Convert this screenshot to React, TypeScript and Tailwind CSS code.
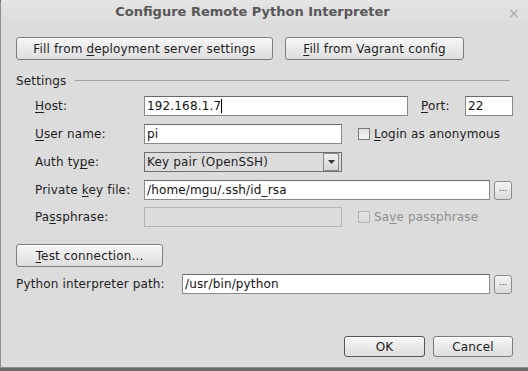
const U = ({ children }: { children: string }) => (
  <span className="underline underline-offset-2 decoration-1">{children}</span>
)

const Button = ({ className = "", children }: { className?: string; children: React.ReactNode }) => (
  <button
    className={
      "flex items-center justify-center rounded-[3px] border border-[#7d7d7d] bg-gradient-to-b from-[#f7f7f7] to-[#dedede] shadow-[inset_0_1px_0_#ffffff] text-[#1e1e1e] " +
      className
    }
  >
    {children}
  </button>
)

const Input = ({ className = "", value = "", caret = false }: { className?: string; value?: string; caret?: boolean }) => (
  <div
    className={
      "flex items-center h-[20px] bg-white border border-[#8a8a8a] border-t-[#6a6a6a] pl-[2px] text-[#111] " + className
    }
  >
    <span>{value}</span>
    {caret && <span className="w-px h-[14px] bg-black" />}
  </div>
)

const Browse = () => (
  <div className="ml-[4px] flex items-center justify-center w-[18px] h-[19px] rounded-[3px] border border-[#8a8a8a] bg-gradient-to-b from-[#f5f5f5] to-[#dadada] text-[8px] leading-none text-[#333] pb-[3px]">
    ...
  </div>
)

const Check = ({ disabled = false }: { disabled?: boolean }) => (
  <div
    className={
      "w-[12px] h-[12px] border bg-gradient-to-b " +
      (disabled ? "border-[#b2b2b2] from-[#e4e4e4] to-[#dcdcdc]" : "border-[#7a7a7a] from-[#e0e0e0] to-[#f4f4f4]")
    }
  />
)

const Label = ({ children }: { children: React.ReactNode }) => (
  <div className="w-[109px] shrink-0">{children}</div>
)

export default function App() {
  return (
    <div className="w-[528px] h-[371px] bg-[#6b6b6b] font-['DejaVu_Sans',sans-serif] text-[12px] tracking-[0.15px] text-[#1e1e1e]">
      <div className="flex flex-col w-[528px] h-[368px] bg-[#dcdcdc] border-l border-b border-[#8e8e8e] rounded-tl-[4px]">
        <div className="relative flex items-center justify-center h-[24px] pr-[24px] bg-gradient-to-b from-[#e4e4e4] to-[#dcdcdc]">
          <span className="font-bold text-[13px] tracking-normal text-[#575757]">Configure Remote Python Interpreter</span>
          <span className="absolute right-[8px] top-[3px] text-[14px] text-[#a8a8a8]">×</span>
        </div>

        <div className="flex flex-col flex-1 pl-[15px] pr-[15px] pt-[13px] pb-[10px]">
          <div className="flex gap-[12px]">
            <Button className="w-[257px] h-[23px]">
              <span>
                Fill from <U>d</U>eployment server settings
              </span>
            </Button>
            <Button className="w-[179px] h-[23px]">
              <span>
                <U>F</U>ill from Vagrant config
              </span>
            </Button>
          </div>

          <div className="mt-[12px] flex items-center h-[17px]">
            <span>Settings</span>
            <div className="ml-[9px] mr-[3px] flex-1 h-px bg-[#a0a0a0]" />
          </div>

          <div className="mt-[7px] pl-[19px] flex flex-col">
            <div className="flex items-center">
              <Label>
                <U>H</U>ost:
              </Label>
              <Input className="w-[264px]" value="192.168.1.7" caret />
              <div className="ml-[13px] w-[44px]">
                <U>P</U>ort:
              </div>
              <Input className="w-[48px]" value="22" />
            </div>

            <div className="mt-[8px] flex items-center">
              <Label>
                <U>U</U>ser name:
              </Label>
              <Input className="w-[198px]" value="pi" />
              <div className="ml-[16px] flex items-center">
                <Check />
                <span className="ml-[4px]">
                  <U>L</U>ogin as anonymous
                </span>
              </div>
            </div>

            <div className="mt-[8px] flex items-center">
              <Label>
                Auth ty<U>p</U>e:
              </Label>
              <div className="relative flex items-center w-[198px] h-[20px] border border-[#6f6f6f] bg-[#dcdcdc] pl-[2px]">
                <span>Key pair (OpenSSH)</span>
                <div className="absolute right-[2px] top-[0px] flex items-center justify-center w-[16px] h-[18px] border border-[#8a8a8a] bg-gradient-to-b from-[#f0f0f0] to-[#d6d6d6]">
                  <svg width="7" height="4" viewBox="0 0 7 4">
                    <path d="M0 0H7L3.5 4Z" fill="#333" />
                  </svg>
                </div>
              </div>
            </div>

            <div className="mt-[8px] flex items-center">
              <Label>
                Private <U>k</U>ey file:
              </Label>
              <Input className="w-[346px]" value="/home/mgu/.ssh/id_rsa" />
              <Browse />
            </div>

            <div className="mt-[7px] flex items-center">
              <Label>
                Pa<U>s</U>sphrase:
              </Label>
              <div className="w-[198px] h-[20px] border border-[#b4b4b4] bg-[#dcdcdc]" />
              <div className="ml-[16px] flex items-center text-[#8e8e8e]">
                <Check disabled />
                <span className="ml-[4px]">
                  Sa<U>v</U>e passphrase
                </span>
              </div>
            </div>
          </div>

          <Button className="mt-[17px] w-[147px] h-[23px]">
            <span>
              <U>T</U>est connection...
            </span>
          </Button>

          <div className="mt-[7px] flex items-center">
            <div className="w-[166px] shrink-0">Python interpreter path:</div>
            <Input className="w-[308px]" value="/usr/bin/python" />
            <Browse />
          </div>

          <div className="flex-1" />

          <div className="flex justify-end gap-[8px]">
            <Button className="w-[81px] h-[21px] border-[#555] shadow-[inset_0_0_0_1px_#9a9a9a]">OK</Button>
            <Button className="w-[80px] h-[21px]">Cancel</Button>
          </div>
        </div>
      </div>
    </div>
  )
}
